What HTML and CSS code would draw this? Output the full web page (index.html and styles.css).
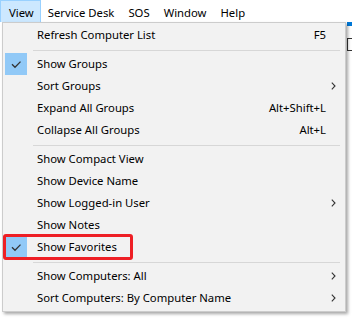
FILE: index.html
```html
<!DOCTYPE html>
<html>
<head>
    <title>View menu</title>
    <meta charset="utf-8">
    <link rel="stylesheet" href="styles.css">
</head>
<body>
    <div class="menubar">
        <span class="menubar-item active">View</span>
        <span class="menubar-item">Service Desk</span>
        <span class="menubar-item">SOS</span>
        <span class="menubar-item">Window</span>
        <span class="menubar-item">Help</span>
    </div>

    <!-- bits of the window behind the menu -->
    <div class="app-tab"></div>
    <div class="app-glyph"></div>

    <div class="dropdown">
        <div class="menu-item">
            <span class="check"></span>
            <span class="label">Refresh Computer List</span>
            <span class="shortcut">F5</span>
            <span class="sub"></span>
        </div>
        <div class="separator"></div>

        <div class="menu-item">
            <span class="check on">
                <svg width="22" height="22" viewBox="0 0 22 22"><path d="M7 11.3 L10 14.3 L15.5 8.6" fill="none" stroke="#333" stroke-width="1.3"/></svg>
            </span>
            <span class="label">Show Groups</span>
            <span class="shortcut"></span>
            <span class="sub"></span>
        </div>
        <div class="menu-item">
            <span class="check"></span>
            <span class="label">Sort Groups</span>
            <span class="shortcut"></span>
            <span class="sub">
                <svg width="5" height="8" viewBox="0 0 5 8"><path d="M0.8 0.7 L4 4 L0.8 7.3" fill="none" stroke="#333" stroke-width="1.1"/></svg>
            </span>
        </div>
        <div class="menu-item">
            <span class="check"></span>
            <span class="label">Expand All Groups</span>
            <span class="shortcut">Alt+Shift+L</span>
            <span class="sub"></span>
        </div>
        <div class="menu-item">
            <span class="check"></span>
            <span class="label">Collapse All Groups</span>
            <span class="shortcut">Alt+L</span>
            <span class="sub"></span>
        </div>
        <div class="separator"></div>

        <div class="menu-item">
            <span class="check"></span>
            <span class="label">Show Compact View</span>
            <span class="shortcut"></span>
            <span class="sub"></span>
        </div>
        <div class="menu-item">
            <span class="check"></span>
            <span class="label">Show Device Name</span>
            <span class="shortcut"></span>
            <span class="sub"></span>
        </div>
        <div class="menu-item">
            <span class="check"></span>
            <span class="label">Show Logged-in User</span>
            <span class="shortcut"></span>
            <span class="sub">
                <svg width="5" height="8" viewBox="0 0 5 8"><path d="M0.8 0.7 L4 4 L0.8 7.3" fill="none" stroke="#333" stroke-width="1.1"/></svg>
            </span>
        </div>
        <div class="menu-item">
            <span class="check"></span>
            <span class="label">Show Notes</span>
            <span class="shortcut"></span>
            <span class="sub"></span>
        </div>
        <div class="menu-item marked">
            <span class="check on">
                <svg width="22" height="22" viewBox="0 0 22 22"><path d="M7 11.3 L10 14.3 L15.5 8.6" fill="none" stroke="#333" stroke-width="1.3"/></svg>
            </span>
            <span class="label">Show Favorites</span>
            <span class="shortcut"></span>
            <span class="sub"></span>
            <span class="mark-box"></span>
        </div>
        <div class="separator"></div>

        <div class="menu-item">
            <span class="check"></span>
            <span class="label">Show Computers: All</span>
            <span class="shortcut"></span>
            <span class="sub">
                <svg width="5" height="8" viewBox="0 0 5 8"><path d="M0.8 0.7 L4 4 L0.8 7.3" fill="none" stroke="#333" stroke-width="1.1"/></svg>
            </span>
        </div>
        <div class="menu-item">
            <span class="check"></span>
            <span class="label">Sort Computers: By Computer Name</span>
            <span class="shortcut"></span>
            <span class="sub">
                <svg width="5" height="8" viewBox="0 0 5 8"><path d="M0.8 0.7 L4 4 L0.8 7.3" fill="none" stroke="#333" stroke-width="1.1"/></svg>
            </span>
        </div>
    </div>
</body>
</html>
```

FILE: styles.css
```css
body {
    margin: 0;
    background: #fff;
    font-family: "Noto Sans", "Open Sans", sans-serif;
    font-size: 11.3px;
    color: #000;
    position: relative;
    height: 318px;
    overflow: hidden;
}
.menubar {
    display: flex;
    height: 22px;
    padding-left: 1px;
}
.menubar-item {
    padding: 3px 6px 0 6px;
    line-height: 17px;
    border: 1px solid transparent;
}
.menubar-item.active {
    background-color: #cce8ff;
    border-color: #99d1ff;
    border-bottom: none;
    margin-left: -1px;
    padding-left: 8px;
}
.app-tab {
    position: absolute;
    left: 347px;
    top: 22px;
    width: 5px;
    height: 4px;
    background-color: #0078d7;
}
.app-glyph {
    position: absolute;
    left: 347px;
    top: 38px;
    width: 5px;
    height: 11px;
    border-left: 1px solid #333;
    border-top: 1px solid #333;
    border-bottom: 1px solid #333;
}
.dropdown {
    position: relative;
    z-index: 1;
    box-sizing: border-box;
    width: 344px;
    margin-left: 2px;
    padding: 1px 0 2px 0;
    background-color: #f2f2f2;
    border: 1px solid #cccccc;
    box-shadow: 2px 2px 3px rgba(0, 0, 0, 0.35);
}
.menu-item {
    display: flex;
    align-items: center;
    height: 22px;
    padding-left: 2px;
}
.check {
    flex: none;
    width: 22px;
    height: 22px;
}
.check.on {
    background-color: #91c9f7;
}
.check svg {
    display: block;
}
.label {
    flex: 1;
    margin-left: 10px;
    line-height: 22px;
    white-space: nowrap;
}
.shortcut {
    line-height: 22px;
    white-space: nowrap;
}
.sub {
    flex: none;
    width: 19px;
    box-sizing: border-box;
    padding-left: 5px;
    display: flex;
    align-items: center;
}
.separator {
    height: 1px;
    margin: 4px 5px 2px 30px;
    background-color: #d7d7d7;
}
.marked {
    position: relative;
}
.mark-box {
    position: absolute;
    left: 0;
    top: -2px;
    width: 130px;
    height: 26px;
    box-sizing: border-box;
    border: 3px solid #ee1f25;
    border-radius: 3px;
}
```
